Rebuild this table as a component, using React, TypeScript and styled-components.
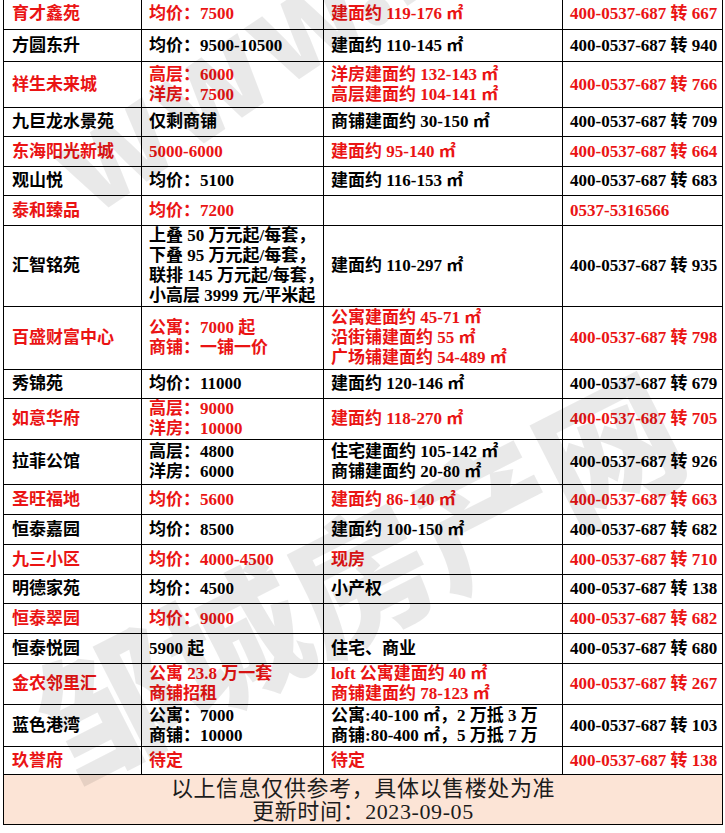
import React from 'react';
import styled, { createGlobalStyle } from 'styled-components';

const GlobalStyle = createGlobalStyle`
  body {
    margin: 0;
    background: #fff;
  }
`;

const Page = styled.div`
  position: relative;
  width: 725px;
  height: 833px;
  overflow: hidden;
`;

const Sheet = styled.table`
  margin: -3px 0 0 3px;
  width: 719px;
  border-collapse: collapse;
  table-layout: fixed;
  font-family: "Liberation Serif", "Noto Sans CJK SC", serif;
  font-weight: 700;
  font-size: 17px;
  line-height: 20px;
`;

const Col = styled.col<{ $w: number }>`
  width: ${p => p.$w}px;
`;

const Row = styled.tr<{ $h: number; $red?: boolean }>`
  height: ${p => p.$h}px;
  color: ${p => (p.$red ? '#ea1414' : '#000')};
`;

const Cell = styled.td`
  border: 1px solid #000;
  padding: 0 0 0 7px;
  vertical-align: middle;
  white-space: nowrap;
  overflow: hidden;
`;

const NameCell = styled(Cell)`
  padding-left: 8px;
`;

const FooterCell = styled.td`
  border: 1px solid #000;
  background: #fce4d6;
  color: #1c1c1c;
  text-align: center;
  vertical-align: middle;
  font-weight: 400;
  font-size: 22px;
  line-height: 23px;
  letter-spacing: 0.6px;
  padding-bottom: 1px;
`;

const Watermark = styled.div<{ $size: number; $spacing: number }>`
  position: absolute;
  white-space: nowrap;
  transform-origin: 0 50%;
  font-family: "Noto Sans CJK SC", "Liberation Sans", sans-serif;
  font-weight: 900;
  font-size: ${p => p.$size}px;
  line-height: 1;
  letter-spacing: ${p => p.$spacing}px;
  color: rgba(0, 0, 0, 0.085);
  pointer-events: none;
`;

type Item = {
  name: string;
  price: string[];
  area: string[];
  phone: string;
  h: number;
  red?: boolean;
};

const P = (n: string) => `400-0537-687 转 ${n}`;

const rows: Item[] = [
  { name: '育才鑫苑', price: ['均价：7500'], area: ['建面约 119-176 ㎡'], phone: P('667'), h: 32, red: true },
  { name: '方圆东升', price: ['均价：9500-10500'], area: ['建面约 110-145 ㎡'], phone: P('940'), h: 32 },
  { name: '祥生未来城', price: ['高层：6000', '洋房：7500'], area: ['洋房建面约 132-143 ㎡', '高层建面约 104-141 ㎡'], phone: P('766'), h: 46, red: true },
  { name: '九巨龙水景苑', price: ['仅剩商铺'], area: ['商铺建面约 30-150 ㎡'], phone: P('709'), h: 29 },
  { name: '东海阳光新城', price: ['5000-6000'], area: ['建面约 95-140 ㎡'], phone: P('664'), h: 30, red: true },
  { name: '观山悦', price: ['均价：5100'], area: ['建面约 116-153 ㎡'], phone: P('683'), h: 29 },
  { name: '泰和臻品', price: ['均价：7200'], area: [], phone: '0537-5316566', h: 30, red: true },
  {
    name: '汇智铭苑',
    price: ['上叠 50 万元起/每套，', '下叠 95 万元起/每套，', '联排 145 万元起/每套，', '小高层 3999 元/平米起'],
    area: ['建面约 110-297 ㎡'],
    phone: P('935'),
    h: 81,
  },
  {
    name: '百盛财富中心',
    price: ['公寓：7000 起', '商铺：一铺一价'],
    area: ['公寓建面约 45-71 ㎡', '沿街铺建面约 55 ㎡', '广场铺建面约 54-489 ㎡'],
    phone: P('798'),
    h: 63,
    red: true,
  },
  { name: '秀锦苑', price: ['均价：11000'], area: ['建面约 120-146 ㎡'], phone: P('679'), h: 29 },
  { name: '如意华府', price: ['高层：9000', '洋房：10000'], area: ['建面约 118-270 ㎡'], phone: P('705'), h: 41, red: true },
  { name: '拉菲公馆', price: ['高层：4800', '洋房：6000'], area: ['住宅建面约 105-142 ㎡', '商铺建面约 20-80 ㎡'], phone: P('926'), h: 45 },
  { name: '圣旺福地', price: ['均价：5600'], area: ['建面约 86-140 ㎡'], phone: P('663'), h: 30, red: true },
  { name: '恒泰嘉园', price: ['均价：8500'], area: ['建面约 100-150 ㎡'], phone: P('682'), h: 30 },
  { name: '九三小区', price: ['均价：4000-4500'], area: ['现房'], phone: P('710'), h: 30, red: true },
  { name: '明德家苑', price: ['均价：4500'], area: ['小产权'], phone: P('138'), h: 29 },
  { name: '恒泰翠园', price: ['均价：9000'], area: [], phone: P('682'), h: 30, red: true },
  { name: '恒泰悦园', price: ['5900 起'], area: ['住宅、商业'], phone: P('680'), h: 30 },
  { name: '金农邻里汇', price: ['公寓 23.8 万一套', '商铺招租'], area: ['loft 公寓建面约 40 ㎡', '商铺建面约 78-123 ㎡'], phone: P('267'), h: 41, red: true },
  { name: '蓝色港湾', price: ['公寓：7000', '商铺：10000'], area: ['公寓:40-100 ㎡，2 万抵 3 万', '商铺:80-400 ㎡，5 万抵 7 万'], phone: P('103'), h: 42 },
  { name: '玖誉府', price: ['待定'], area: ['待定'], phone: P('138'), h: 28, red: true },
];

const Lines = ({ items }: { items: string[] }) => (
  <>
    {items.map((t, i) => (
      <div key={i}>{t}</div>
    ))}
  </>
);

export default function App() {
  return (
    <Page>
      <GlobalStyle />
      <Sheet>
        <colgroup>
          <Col $w={138} />
          <Col $w={182} />
          <Col $w={239} />
          <Col $w={160} />
        </colgroup>
        <tbody>
          {rows.map(r => (
            <Row key={r.name} $h={r.h} $red={r.red}>
              <NameCell>{r.name}</NameCell>
              <Cell>
                <Lines items={r.price} />
              </Cell>
              <Cell>
                <Lines items={r.area} />
              </Cell>
              <Cell>{r.phone}</Cell>
            </Row>
          ))}
          <Row $h={50}>
            <FooterCell colSpan={4}>
              以上信息仅供参考，具体以售楼处为准
              <br />
              更新时间：2023-09-05
            </FooterCell>
          </Row>
        </tbody>
      </Sheet>
      <Watermark $size={128} $spacing={0} style={{ left: 60, top: 110, transform: 'rotate(-34deg)' }}>
        www.zcfcw.com
      </Watermark>
      <Watermark $size={140} $spacing={0} style={{ left: 45, top: 660, transform: 'rotate(-27deg)' }}>
        邹城房产网
      </Watermark>
    </Page>
  );
}
